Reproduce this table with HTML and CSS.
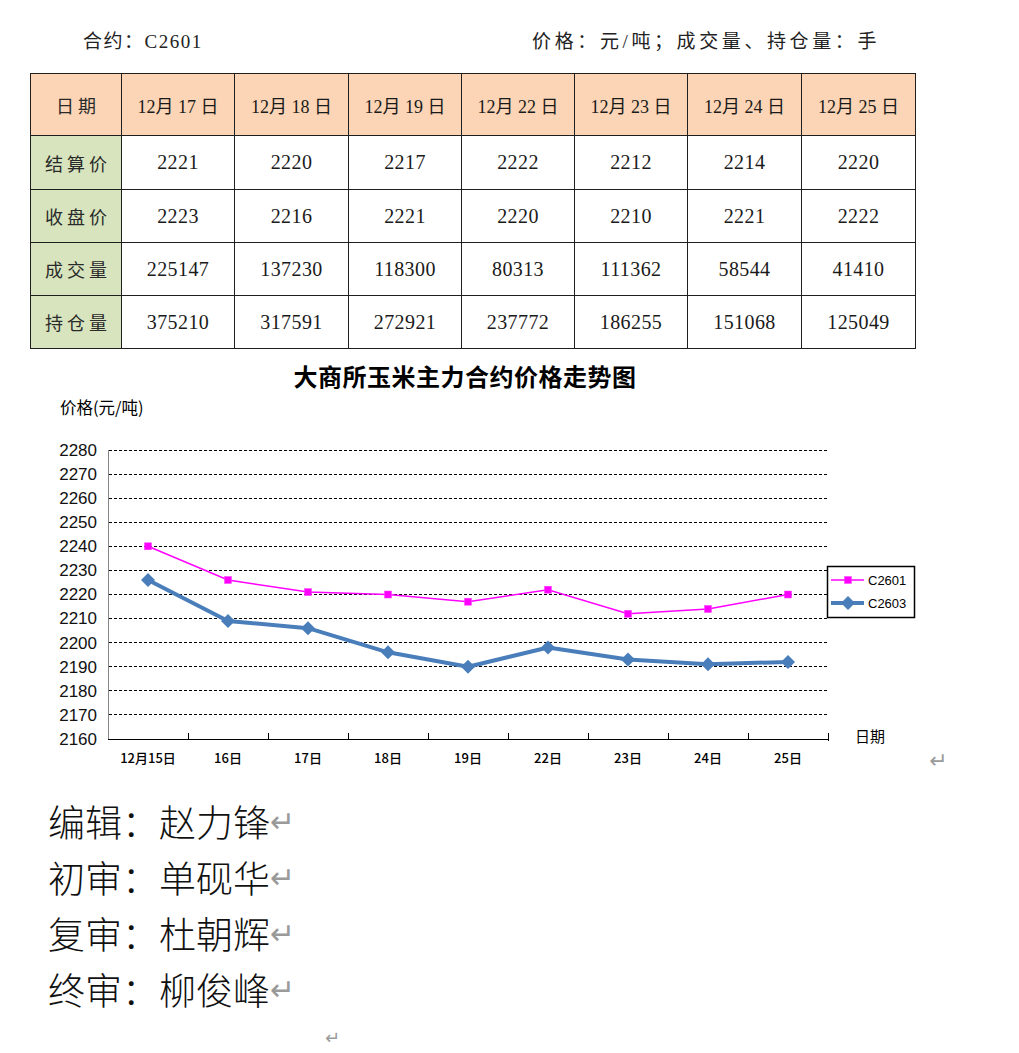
FILE: index.html
```html
<!DOCTYPE html>
<html lang="zh-CN">
<head>
<meta charset="utf-8">
<title>大商所玉米主力合约</title>
<link rel="stylesheet" href="styles.css">
</head>
<body>
<div class="page">
  <div class="meta">
    <span class="meta-contract">合约：C2601</span>
    <span class="meta-unit">价格：元/吨；成交量、持仓量：手</span>
  </div>

  <table class="quotes">
    <colgroup>
      <col class="c-label">
      <col class="c-a"><col class="c-b"><col class="c-a"><col class="c-a">
      <col class="c-a"><col class="c-b"><col class="c-b">
    </colgroup>
    <thead>
      <tr>
        <th class="row-head">日期</th>
        <th>12月 17 日</th><th>12月 18 日</th><th>12月 19 日</th><th>12月 22 日</th>
        <th>12月 23 日</th><th>12月 24 日</th><th>12月 25 日</th>
      </tr>
    </thead>
    <tbody>
      <tr class="r1">
        <th class="row-head">结算价</th>
        <td>2221</td><td>2220</td><td>2217</td><td>2222</td><td>2212</td><td>2214</td><td>2220</td>
      </tr>
      <tr>
        <th class="row-head">收盘价</th>
        <td>2223</td><td>2216</td><td>2221</td><td>2220</td><td>2210</td><td>2221</td><td>2222</td>
      </tr>
      <tr>
        <th class="row-head">成交量</th>
        <td>225147</td><td>137230</td><td>118300</td><td>80313</td><td>111362</td><td>58544</td><td>41410</td>
      </tr>
      <tr>
        <th class="row-head">持仓量</th>
        <td>375210</td><td>317591</td><td>272921</td><td>237772</td><td>186255</td><td>151068</td><td>125049</td>
      </tr>
    </tbody>
  </table>

  <h2 class="chart-title">大商所玉米主力合约价格走势图</h2>

  <svg class="chart" width="1019" height="390" viewBox="0 390 1019 390" xmlns="http://www.w3.org/2000/svg">
    <text class="axis-title" x="60" y="413">价格(元/吨)</text>

    <!-- grid -->
    <g class="grid">
      <line x1="109" y1="449.5" x2="828" y2="449.5"/>
      <line x1="109" y1="473.5" x2="828" y2="473.5"/>
      <line x1="109" y1="497.5" x2="828" y2="497.5"/>
      <line x1="109" y1="521.5" x2="828" y2="521.5"/>
      <line x1="109" y1="545.5" x2="828" y2="545.5"/>
      <line x1="109" y1="569.5" x2="828" y2="569.5"/>
      <line x1="109" y1="593.5" x2="828" y2="593.5"/>
      <line x1="109" y1="617.5" x2="828" y2="617.5"/>
      <line x1="109" y1="641.5" x2="828" y2="641.5"/>
      <line x1="109" y1="665.5" x2="828" y2="665.5"/>
      <line x1="109" y1="689.5" x2="828" y2="689.5"/>
      <line x1="109" y1="713.5" x2="828" y2="713.5"/>
    </g>

    <!-- y labels -->
    <g class="ylab">
      <text x="97" y="455">2280</text>
      <text x="97" y="479">2270</text>
      <text x="97" y="503">2260</text>
      <text x="97" y="527">2250</text>
      <text x="97" y="551">2240</text>
      <text x="97" y="575">2230</text>
      <text x="97" y="599">2220</text>
      <text x="97" y="623">2210</text>
      <text x="97" y="648">2200</text>
      <text x="97" y="672">2190</text>
      <text x="97" y="696">2180</text>
      <text x="97" y="720">2170</text>
      <text x="97" y="744">2160</text>
    </g>

    <!-- axes -->
    <line class="axis-y" x1="108.5" y1="449" x2="108.5" y2="739"/>
    <line class="axis-x" x1="108" y1="738.5" x2="829" y2="738.5"/>
    <g class="ticks">
      <line x1="188.5" y1="732" x2="188.5" y2="738"/>
      <line x1="268.5" y1="732" x2="268.5" y2="738"/>
      <line x1="348.5" y1="732" x2="348.5" y2="738"/>
      <line x1="428.5" y1="732" x2="428.5" y2="738"/>
      <line x1="508.5" y1="732" x2="508.5" y2="738"/>
      <line x1="588.5" y1="732" x2="588.5" y2="738"/>
      <line x1="668.5" y1="732" x2="668.5" y2="738"/>
      <line x1="748.5" y1="732" x2="748.5" y2="738"/>
      <line x1="828.5" y1="732" x2="828.5" y2="740"/>
    </g>

    <!-- x labels -->
    <g class="xlab">
      <text x="148" y="762">12月15日</text>
      <text x="228" y="762">16日</text>
      <text x="308" y="762">17日</text>
      <text x="388" y="762">18日</text>
      <text x="468" y="762">19日</text>
      <text x="548" y="762">22日</text>
      <text x="628" y="762">23日</text>
      <text x="708" y="762">24日</text>
      <text x="788" y="762">25日</text>
    </g>
    <text class="x-title" x="855" y="741">日期</text>

    <!-- C2603 -->
    <polyline class="s2603" points="148,579 228,620 308,627.2 388,651.3 468,665.8 548,646.5 628,658.5 708,663.3 788,660.9"/>
    <g class="m2603">
      <path d="M148 572 L155 579 L148 586 L141 579 Z"/>
      <path d="M228 613 L235 620 L228 627 L221 620 Z"/>
      <path d="M308 620.2 L315 627.2 L308 634.2 L301 627.2 Z"/>
      <path d="M388 644.3 L395 651.3 L388 658.3 L381 651.3 Z"/>
      <path d="M468 658.8 L475 665.8 L468 672.8 L461 665.8 Z"/>
      <path d="M548 639.5 L555 646.5 L548 653.5 L541 646.5 Z"/>
      <path d="M628 651.5 L635 658.5 L628 665.5 L621 658.5 Z"/>
      <path d="M708 656.3 L715 663.3 L708 670.3 L701 663.3 Z"/>
      <path d="M788 653.9 L795 660.9 L788 667.9 L781 660.9 Z"/>
    </g>

    <!-- C2601 -->
    <polyline class="s2601" points="148,545.3 228,579 308,591.1 388,593.5 468,600.7 548,588.7 628,612.8 708,608 788,593.5"/>
    <g class="m2601">
      <rect x="144.5" y="541.8" width="7" height="7"/>
      <rect x="224.5" y="575.5" width="7" height="7"/>
      <rect x="304.5" y="587.6" width="7" height="7"/>
      <rect x="384.5" y="590" width="7" height="7"/>
      <rect x="464.5" y="597.2" width="7" height="7"/>
      <rect x="544.5" y="585.2" width="7" height="7"/>
      <rect x="624.5" y="609.3" width="7" height="7"/>
      <rect x="704.5" y="604.5" width="7" height="7"/>
      <rect x="784.5" y="590" width="7" height="7"/>
    </g>

    <!-- legend -->
    <rect class="legend-box" x="827.5" y="565.5" width="87" height="51"/>
    <line class="s2601" x1="831" y1="579" x2="864" y2="579"/>
    <rect class="m2601" x="844.5" y="575.5" width="7" height="7"/>
    <text class="legend-text" x="868" y="583.5">C2601</text>
    <line class="s2603" x1="831" y1="602" x2="864" y2="602"/>
    <path class="m2603" d="M848 595 L855 602 L848 609 L841 602 Z"/>
    <text class="legend-text" x="868" y="606.5">C2603</text>

    <text class="ret-mark" x="929" y="767">↵</text>
  </svg>

  <div class="signatures">
    <p class="sig">编辑：赵力锋<span class="ret">↵</span></p>
    <p class="sig">初审：单砚华<span class="ret">↵</span></p>
    <p class="sig">复审：杜朝辉<span class="ret">↵</span></p>
    <p class="sig">终审：柳俊峰<span class="ret">↵</span></p>
    <p class="sig-end"><span class="ret-small">↵</span></p>
  </div>
</div>
</body>
</html>
```

FILE: styles.css
```css
* { box-sizing: border-box; }

html, body {
  margin: 0;
  padding: 0;
  background: #ffffff;
}

body {
  font-family: "Liberation Serif", "Noto Sans CJK SC", serif;
  color: #151515;
}

.page {
  width: 1019px;
}

/* top meta line */
.meta {
  display: flex;
  justify-content: space-between;
  width: 880px;
  height: 54px;
  padding: 30px 0 0 83px;
  font-size: 19px;
  line-height: 24px;
  color: #222;
}

.meta-contract { letter-spacing: 1.5px; }
.meta-unit { letter-spacing: 3.6px; }

/* table */
.quotes {
  margin: 19px 0 0 30px;
  border-collapse: collapse;
  table-layout: fixed;
  width: 886px;
}

.c-label { width: 91px; }
.c-a { width: 113px; }
.c-b { width: 114px; }

.quotes th,
.quotes td {
  border: 1px solid #1f1f1f;
  padding: 0;
  text-align: center;
  vertical-align: middle;
  font-weight: normal;
}

.quotes thead th {
  background: #fbd5b5;
  height: 62px;
  font-size: 18px;
  color: #1a1a1a;
}

.quotes tbody th {
  background: #d7e4bd;
}

.quotes .row-head {
  font-size: 18px;
  letter-spacing: 4px;
  text-indent: 4px;
  color: #2a2a2a;
}

.quotes td {
  height: 53px;
  font-size: 20px;
  letter-spacing: 0.4px;
  color: #1a1a1a;
}

.quotes tr.r1 td,
.quotes tr.r1 th {
  height: 54px;
}

/* chart */
.chart-title {
  margin: 12px 0 0 0;
  width: 930px;
  height: 30px;
  line-height: 30px;
  text-align: center;
  font-family: "Noto Sans CJK SC", sans-serif;
  font-size: 24px;
  font-weight: 700;
  letter-spacing: 0.5px;
  color: #000;
}

.chart {
  display: block;
}

.chart text {
  font-family: "Noto Sans CJK SC", sans-serif;
  fill: #000;
}

.chart .axis-title {
  font-size: 16.5px;
}

.chart .ylab text {
  font-family: "Liberation Sans", "Noto Sans CJK SC", sans-serif;
  font-size: 17px;
  text-anchor: end;
  fill: #111;
}

.chart .xlab text {
  font-size: 13px;
  text-anchor: middle;
  font-weight: 500;
}

.chart .x-title {
  font-size: 15px;
}

.grid line {
  stroke: #000;
  stroke-width: 1;
  stroke-dasharray: 3 2;
}

.axis-y {
  stroke: #868686;
  stroke-width: 1;
}

.axis-x,
.ticks line {
  stroke: #000;
  stroke-width: 1;
}

.s2601 {
  fill: none;
  stroke: #ff00ff;
  stroke-width: 1.5;
}

.m2601 rect,
rect.m2601 {
  fill: #ff00ff;
  stroke: #ff40ff;
  stroke-width: 0.5;
}

.s2603 {
  fill: none;
  stroke: #4a7ebb;
  stroke-width: 4;
  stroke-linejoin: round;
}

.m2603 path,
path.m2603 {
  fill: #4a7ebb;
}

.legend-box {
  fill: #fff;
  stroke: #000;
  stroke-width: 1.5;
}

.chart .legend-text {
  font-family: "Liberation Sans", sans-serif;
  font-size: 13px;
}

.chart .ret-mark {
  font-family: "DejaVu Sans", sans-serif;
  font-size: 22px;
  fill: #9a9a9a;
}

/* signatures */
.signatures {
  margin-top: 12px;
  padding-left: 48px;
  font-family: "Noto Sans CJK SC", sans-serif;
  color: #111;
}

.sig {
  margin: 0;
  height: 56px;
  font-size: 37px;
  font-weight: 300;
  line-height: 56px;
}

.ret {
  font-family: "DejaVu Sans", sans-serif;
  font-size: 30px;
  font-weight: 400;
  color: #9a9a9a;
  vertical-align: 5px;
}

.sig-end {
  margin: 0;
  height: 37px;
  padding: 10px 0 0 277px;
  line-height: 20px;
}

.ret-small {
  font-family: "DejaVu Sans", sans-serif;
  font-size: 18px;
  line-height: 20px;
  color: #9a9a9a;
}
```
